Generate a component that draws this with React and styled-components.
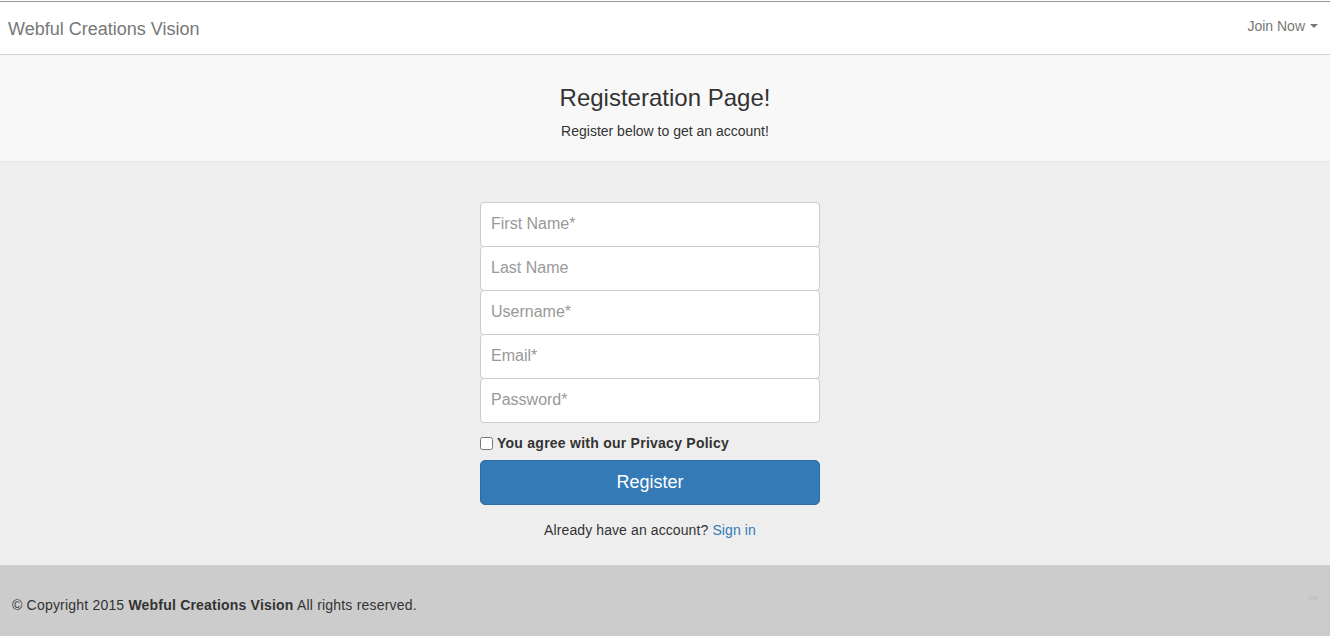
import React from "react";
import styled, { createGlobalStyle } from "styled-components";

const GlobalStyle = createGlobalStyle`
  html, body {
    margin: 0;
    padding: 0;
    background: #eeeeee;
  }
  body {
    font-family: "Liberation Sans", Arial, Helvetica, sans-serif;
    font-size: 14px;
    color: #333;
    padding-top: 1px;
    background: #fff;
  }
  * { box-sizing: border-box; }
`;

// <nav>
const Navbar = styled.nav`
  display: flex;
  justify-content: space-between;
  align-items: center;
  height: 54px;
  background: #fff;
  border-top: 1px solid #9a9a9a;
  border-bottom: 1px solid #d5d5d5;
  padding: 0 12px 0 8px;
`;

const Brand = styled.a`
  font-size: 18px;
  color: #777;
  text-decoration: none;
  margin-top: 3px;
`;

const NavItem = styled.a`
  display: flex;
  align-items: center;
  gap: 5px;
  color: #777;
  font-size: 14px;
  text-decoration: none;
  margin-top: -5px;
`;

const Caret = styled.span`
  display: inline-block;
  width: 0;
  height: 0;
  border-top: 4px solid #777;
  border-left: 4px solid transparent;
  border-right: 4px solid transparent;
`;

// <header>
const PageHeader = styled.header`
  background: #f8f8f8;
  border-bottom: 1px solid #e3e3e3;
  text-align: center;
  padding: 28px 0 20px;
`;

const Title = styled.h1`
  font-size: 24px;
  font-weight: 400;
  margin: 0 0 8px;
  line-height: 30px;
`;

const Subtitle = styled.p`
  margin: 0;
  font-size: 14px;
  line-height: 20px;
`;

const Main = styled.main`
  background: #eeeeee;
  padding: 40px 30px 25px 0;
  display: flex;
  justify-content: center;
`;

const Form = styled.form`
  width: 340px;
  display: flex;
  flex-direction: column;
`;

const Input = styled.input`
  height: 45px;
  margin-bottom: -1px;
  padding: 9px 10px 11px;
  font-family: inherit;
  font-size: 16px;
  color: #555;
  background: #fff;
  border: 1px solid #cccccc;
  border-radius: 4px;
  outline: none;

  &::placeholder {
    color: #999;
  }
`;

const CheckRow = styled.label`
  display: flex;
  align-items: center;
  gap: 4px;
  margin: 13px 0 9px;
  font-weight: 700;
  font-size: 14px;
  letter-spacing: 0.25px;
  color: #333;
`;

const CheckBox = styled.input`
  margin: 0;
  width: 13px;
  height: 13px;
`;

const Button = styled.button`
  height: 45px;
  background: #337ab7;
  border: 1px solid #2e6da4;
  border-radius: 5px;
  color: #fff;
  font-family: inherit;
  font-size: 18px;
`;

const SignIn = styled.p`
  text-align: center;
  margin: 15px 0 0;
  line-height: 20px;
  letter-spacing: 0.1px;

  a {
    color: #337ab7;
    text-decoration: none;
  }
`;

const Footer = styled.footer`
  position: relative;
  background: #cccccc;
  height: 71px;
  padding: 30px 12px 0;
  line-height: 20px;
  letter-spacing: 0.2px;
`;

const ToTop = styled.span`
  position: absolute;
  right: 12px;
  top: 31px;
  width: 10px;
  height: 4px;
  background: #c4c4c4;
`;

export default function App() {
  return (
    <>
      <GlobalStyle />
      <Navbar>
        <Brand href="#">Webful Creations Vision</Brand>
        <NavItem href="#">
          Join Now <Caret />
        </NavItem>
      </Navbar>
      <PageHeader>
        <Title>Registeration Page!</Title>
        <Subtitle>Register below to get an account!</Subtitle>
      </PageHeader>
      <Main>
        <Form onSubmit={(e) => e.preventDefault()}>
          <Input placeholder="First Name*" />
          <Input placeholder="Last Name" />
          <Input placeholder="Username*" />
          <Input placeholder="Email*" type="email" />
          <Input placeholder="Password*" type="password" />
          <CheckRow>
            <CheckBox type="checkbox" />
            You agree with our Privacy Policy
          </CheckRow>
          <Button type="submit">Register</Button>
          <SignIn>
            Already have an account? <a href="#">Sign in</a>
          </SignIn>
        </Form>
      </Main>
      <Footer>
        © Copyright 2015 <b>Webful Creations Vision</b> All rights reserved.
        <ToTop />
      </Footer>
    </>
  );
}
